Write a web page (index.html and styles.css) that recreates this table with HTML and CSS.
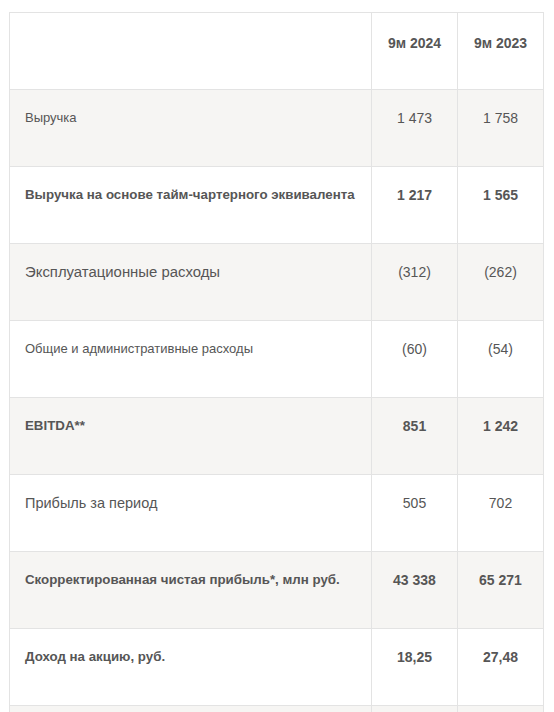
FILE: index.html
```html
<!DOCTYPE html>
<html lang="ru">
<head>
<meta charset="utf-8">
<title>Результаты 9м 2024</title>
<link rel="stylesheet" href="styles.css">
</head>
<body>
<table class="results">
  <colgroup>
    <col class="col-label">
    <col class="col-num">
    <col class="col-num">
  </colgroup>
  <thead>
    <tr>
      <th class="label"></th>
      <th class="num head">9м 2024</th>
      <th class="num head">9м 2023</th>
    </tr>
  </thead>
  <tbody>
    <tr class="alt">
      <td class="label s13">Выручка</td>
      <td class="num">1 473</td>
      <td class="num">1 758</td>
    </tr>
    <tr>
      <td class="label s13 b">Выручка на основе тайм-чартерного эквивалента</td>
      <td class="num b">1 217</td>
      <td class="num b">1 565</td>
    </tr>
    <tr class="alt">
      <td class="label s15">Эксплуатационные расходы</td>
      <td class="num">(312)</td>
      <td class="num">(262)</td>
    </tr>
    <tr>
      <td class="label s12">Общие и административные расходы</td>
      <td class="num">(60)</td>
      <td class="num">(54)</td>
    </tr>
    <tr class="alt">
      <td class="label s13 b">EBITDA**</td>
      <td class="num b">851</td>
      <td class="num b">1 242</td>
    </tr>
    <tr>
      <td class="label s14">Прибыль за период</td>
      <td class="num">505</td>
      <td class="num">702</td>
    </tr>
    <tr class="alt">
      <td class="label s13 b">Скорректированная чистая прибыль*, млн руб.</td>
      <td class="num b">43 338</td>
      <td class="num b">65 271</td>
    </tr>
    <tr>
      <td class="label s13 b">Доход на акцию, руб.</td>
      <td class="num b">18,25</td>
      <td class="num b">27,48</td>
    </tr>
    <tr class="alt">
      <td class="label"></td>
      <td class="num"></td>
      <td class="num"></td>
    </tr>
  </tbody>
</table>
</body>
</html>
```

FILE: styles.css
```css
html, body {
  margin: 0;
  padding: 0;
  background: #ffffff;
}

body {
  padding: 12px 0 0 9px;
  font-family: "Liberation Sans", Arial, sans-serif;
  color: #565656;
}

.results {
  border-collapse: collapse;
  table-layout: fixed;
  width: 535px;
}

.col-label { width: 362px; }
.col-num { width: 86px; }

.results th,
.results td {
  border: 1px solid #e3e3e3;
  height: 77px;
  box-sizing: border-box;
  padding: 18px 15px 0;
  vertical-align: top;
  line-height: 20px;
  font-weight: normal;
}

.results .num {
  text-align: center;
  padding-left: 4px;
  padding-right: 4px;
  font-size: 14px;
}

.results .head {
  font-weight: bold;
  font-size: 14px;
  padding-top: 20px;
}

.results .label {
  text-align: left;
}

.alt td,
.alt th {
  background: #f6f5f3;
}

.s12 { font-size: 13px; }
.s13 { font-size: 13px; }
.s14 { font-size: 14.5px; }
.s15 { font-size: 14.9px; }

.results .s13.b { font-size: 13.3px; }
.results .b { font-weight: bold; }
```
